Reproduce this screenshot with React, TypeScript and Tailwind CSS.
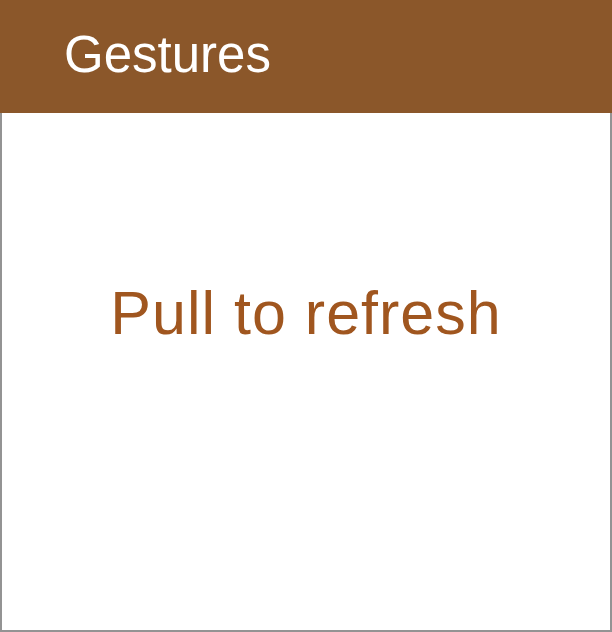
import React from 'react';

const App: React.FC = () => {
  return (
    <div className="w-[612px] h-[632px] flex flex-col bg-white" style={{ fontFamily: '"Liberation Sans", Arial, sans-serif' }}>
      {/* Header */}
      <div className="h-[113px] bg-[#8b572a] flex items-center pl-[64px] shrink-0">
        <h1 className="text-white text-[51px] leading-none font-normal -mt-[4px]">Gestures</h1>
      </div>

      {/* Body */}
      <div className="flex-1 border-2 border-t-0 border-[#939393] flex justify-center pt-[170px]">
        <p className="text-[#a0561f] text-[61px] leading-none tracking-[1px]">Pull to refresh</p>
      </div>
    </div>
  );
};

export default App;
